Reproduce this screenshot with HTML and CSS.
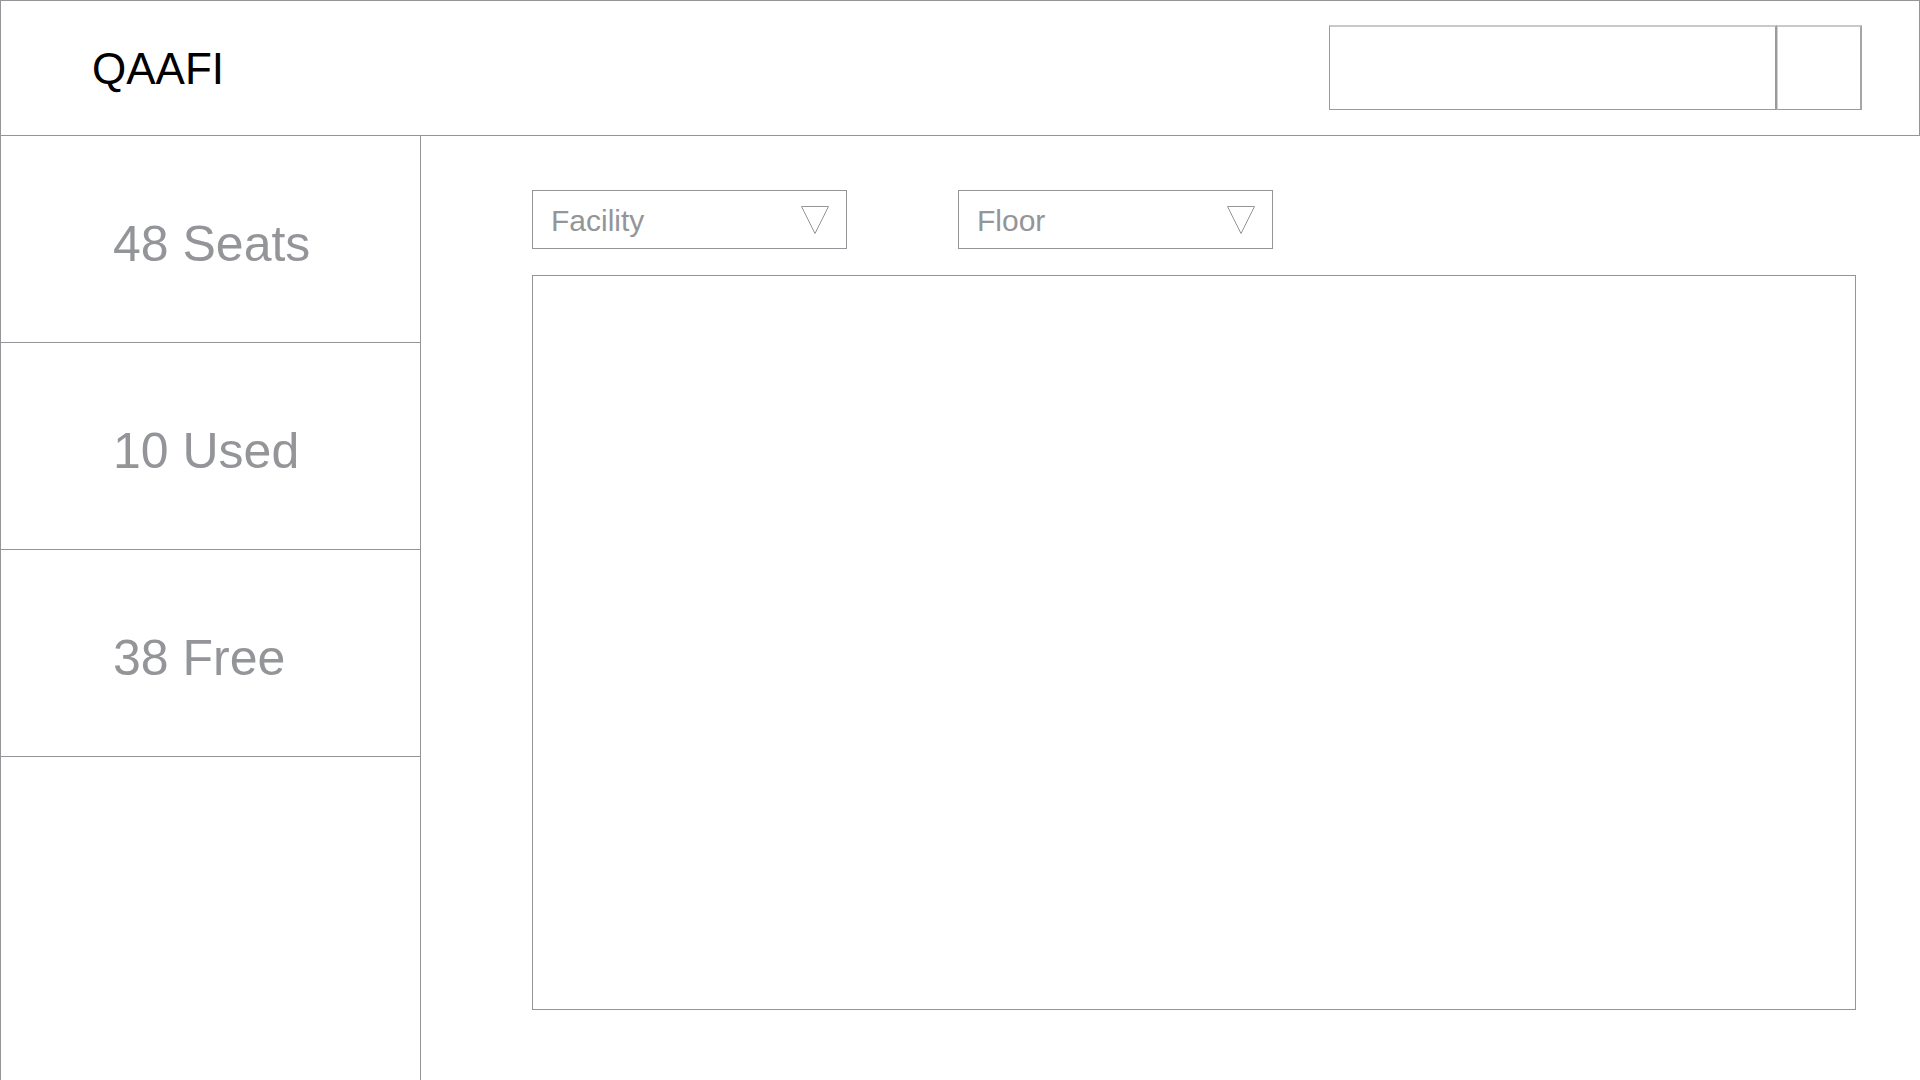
FILE: index.html
```html
<!DOCTYPE html>
<html lang="en">
<head>
<meta charset="utf-8">
<title>QAAFI</title>
<link rel="stylesheet" href="styles.css">
</head>
<body>
<header class="topbar">
  <div class="logo">QAAFI</div>
  <div class="search">
    <div class="search-input"></div>
    <div class="search-btn"></div>
  </div>
</header>
<div class="layout">
  <aside class="stats">
    <div class="stat"><span>48 Seats</span></div>
    <div class="stat"><span>10 Used</span></div>
    <div class="stat"><span>38 Free</span></div>
    <div class="stat-rest"></div>
  </aside>
  <main class="content">
    <div class="filters">
      <div class="select">
        <span class="select-label">Facility</span>
        <svg class="caret" width="28" height="28" viewBox="0 0 28 28"><polygon points="0.5,0.5 27.5,0.5 14,27.5" fill="none" stroke="#939598" stroke-width="1"/></svg>
      </div>
      <div class="select">
        <span class="select-label">Floor</span>
        <svg class="caret" width="28" height="28" viewBox="0 0 28 28"><polygon points="0.5,0.5 27.5,0.5 14,27.5" fill="none" stroke="#939598" stroke-width="1"/></svg>
      </div>
    </div>
    <div class="map"></div>
  </main>
</div>
</body>
</html>
```
FILE: styles.css
```css
* { box-sizing: border-box; }
html, body {
  margin: 0;
  padding: 0;
  background: #ffffff;
  font-family: "Liberation Sans", Arial, Helvetica, sans-serif;
}
body {
  width: 1920px;
  height: 1080px;
  overflow: hidden;
  display: flex;
  flex-direction: column;
}
.topbar {
  height: 136px;
  flex: none;
  border: 1px solid #939598;
  display: flex;
  align-items: center;
  justify-content: space-between;
  padding: 0 57px 0 91px;
}
.logo {
  font-size: 44px;
  color: #000000;
  line-height: 1;
  padding-top: 2px;
}
.search {
  display: flex;
  height: 85px;
  margin-top: -2px;
}
.search-input {
  width: 448px;
  height: 85px;
  border: 1px solid #9a9b9e;
  border-top: 2px solid #c9c9c9;
  border-right: 2px solid #9a9b9e;
}
.search-btn {
  width: 85px;
  height: 85px;
  border: 1px solid #9a9b9e;
  border-top: 2px solid #c9c9c9;
  border-left: 1px solid #cfcfcf;
  border-right: 2px solid #a4a5a7;
}
.layout {
  flex: 1;
  display: flex;
  min-height: 0;
}
.stats {
  width: 421px;
  flex: none;
  border-left: 1px solid #939598;
  border-right: 1px solid #939598;
  display: flex;
  flex-direction: column;
}
.stat {
  height: 207px;
  border-bottom: 1px solid #939598;
  display: flex;
  align-items: center;
  padding: 10px 0 0 112px;
  font-size: 50px;
  color: #939598;
}
.stat-rest { flex: 1; }
.content {
  flex: 1;
  padding: 54px 0 0 111px;
}
.filters {
  display: flex;
  gap: 111px;
}
.select {
  width: 315px;
  height: 59px;
  border: 1px solid #939598;
  display: flex;
  align-items: center;
  justify-content: space-between;
  padding: 0 17px 0 18px;
}
.select-label {
  font-size: 30px;
  color: #939598;
  padding-top: 2px;
}
.caret { display: block; margin-top: 1px; }
.map {
  margin-top: 26px;
  width: 1324px;
  height: 735px;
  border: 1px solid #939598;
}
```
